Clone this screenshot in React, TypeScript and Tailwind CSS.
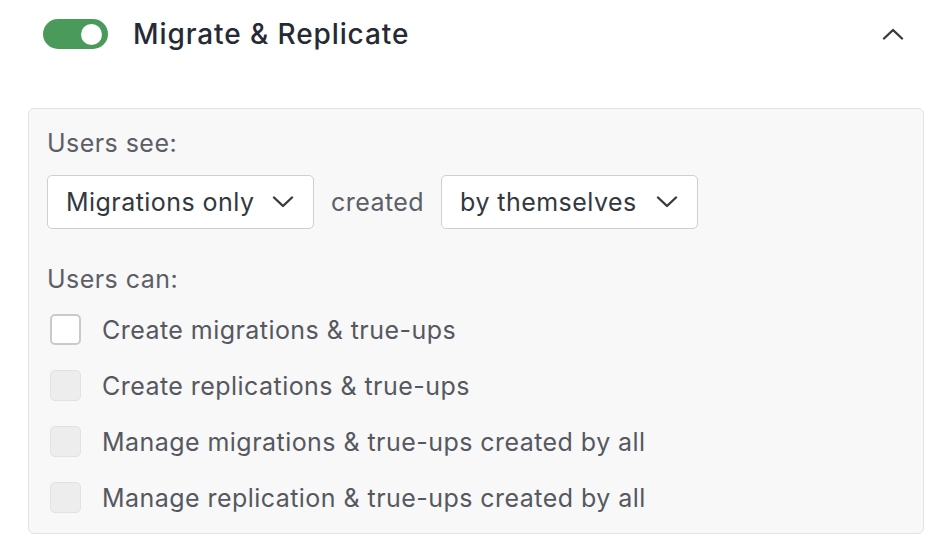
import { useState } from "react";

const permissions = [
  "Create migrations & true-ups",
  "Create replications & true-ups",
  "Manage migrations & true-ups created by all",
  "Manage replication & true-ups created by all",
];

function Chevron({ up = false }: { up?: boolean }) {
  return (
    <svg width="22" height="12" viewBox="0 0 22 12" fill="none">
      <path
        d={up ? "M2 10.5 L11 2 L20 10.5" : "M2 1.5 L11 10 L20 1.5"}
        stroke="#3a3a3a"
        strokeWidth="2.4"
        strokeLinecap="round"
        strokeLinejoin="round"
      />
    </svg>
  );
}

function Select({ value, width }: { value: string; width: string }) {
  return (
    <div
      className={`flex h-[54px] items-center justify-between rounded-[5px] border border-[#cfcfcf] bg-white pl-[18px] pr-[19px] ${width}`}
    >
      <span className="text-[25px] leading-[30px] tracking-[0.45px] text-[#333840]">{value}</span>
      <Chevron />
    </div>
  );
}

export default function App() {
  const [enabled, setEnabled] = useState(true);
  const [checked, setChecked] = useState<boolean[]>([false, false, false, false]);

  return (
    <div className="h-[560px] w-[952px] bg-white font-['Inter','Noto_Sans',sans-serif]">
      {/* header: toggle + title + collapse */}
      <div className="flex h-[68px] items-center pl-[43px] pr-[48px]">
        <button
          onClick={() => setEnabled(!enabled)}
          className="flex h-[30px] w-[65px] items-center justify-end rounded-full bg-[#4a9a5b] pr-[6px]"
        >
          <span className="h-[21px] w-[21px] rounded-full bg-white" />
        </button>
        <span className="ml-[25px] text-[28px] font-medium leading-[32px] tracking-[0.9px] text-[#252a34]">
          Migrate &amp; Replicate
        </span>
        <div className="ml-auto">
          <Chevron up />
        </div>
      </div>

      {/* settings panel */}
      <div className="mx-[28px] mt-[40px] flex flex-col rounded-[6px] border border-[#e3e3e3] bg-[#f8f8f8] pb-[20px] pl-[18px] pt-[19px]">
        <span className="text-[25px] leading-[30px] tracking-[0.45px] text-[#5c5f66]">Users see:</span>

        <div className="mt-[17px] flex items-center">
          <Select value="Migrations only" width="w-[267px]" />
          <span className="mx-[17px] text-[25px] leading-[30px] tracking-[0.45px] text-[#5c5f66]">created</span>
          <Select value="by themselves" width="w-[257px]" />
        </div>

        <span className="mt-[35px] text-[25px] leading-[30px] tracking-[0.45px] text-[#5c5f66]">Users can:</span>

        <div className="mt-[20px] flex flex-col gap-[25px]">
          {permissions.map((label, i) => (
            <label key={label} className="flex h-[31px] items-center">
              <span
                onClick={() =>
                  i === 0 &&
                  setChecked(checked.map((c, j) => (j === i ? !c : c)))
                }
                className={
                  i === 0
                    ? "ml-[3px] h-[31px] w-[31px] rounded-[5px] border-2 border-[#cacaca] bg-white"
                    : "ml-[3px] h-[31px] w-[31px] rounded-[5px] border border-[#e2e2e2] bg-[#ededed]"
                }
              />
              <span className="ml-[21px] text-[25px] leading-[30px] tracking-[0.45px] text-[#555860]">{label}</span>
            </label>
          ))}
        </div>
      </div>
    </div>
  );
}
